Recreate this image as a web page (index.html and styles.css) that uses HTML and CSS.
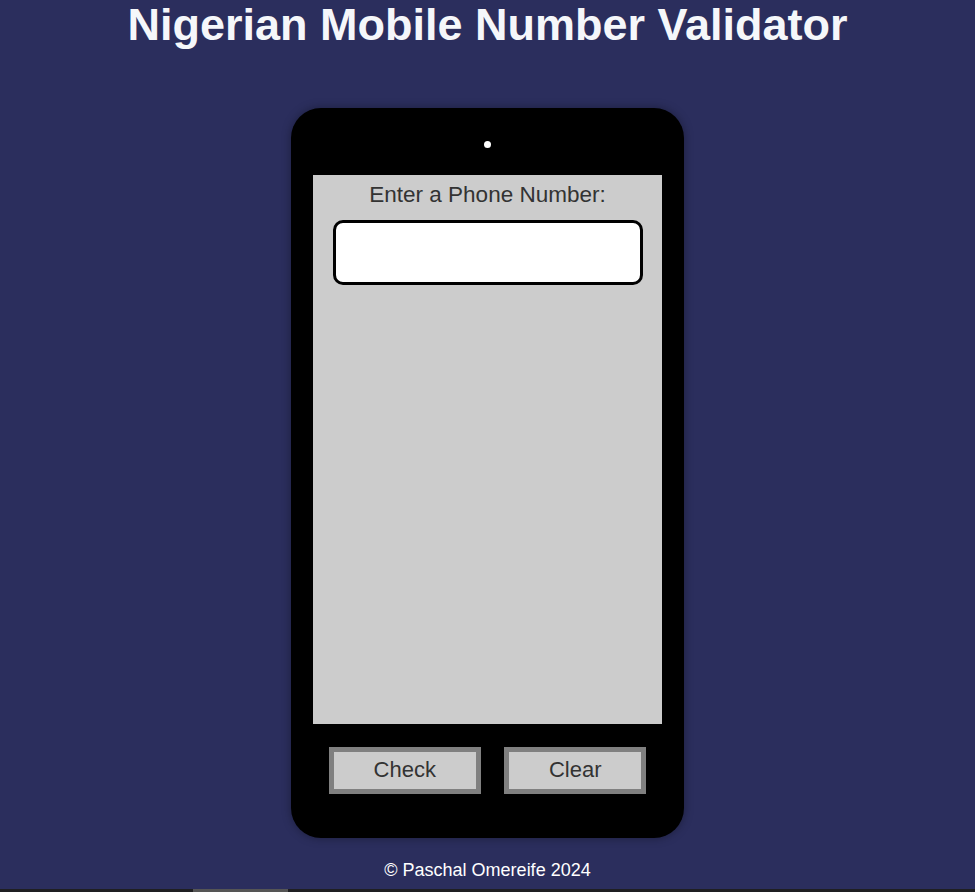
FILE: index.html
```html
<!DOCTYPE html>
<html lang="en">
<head>
<meta charset="utf-8">
<title>Nigerian Mobile Number Validator</title>
<link rel="stylesheet" href="styles.css">
</head>
<body>
<h1 class="title">Nigerian Mobile Number Validator</h1>
<main class="phone">
  <div class="camera"></div>
  <section class="screen">
    <label class="label" for="user-input">Enter a Phone Number:</label>
    <input class="number-input" id="user-input" type="text">
  </section>
  <div class="controls">
    <button class="btn" type="button">Check</button>
    <button class="btn" type="button">Clear</button>
  </div>
</main>
<footer class="footer">© Paschal Omereife 2024</footer>
<div class="strip"><span class="strip-thumb"></span></div>
</body>
</html>
```

FILE: styles.css
```css
* {
  box-sizing: border-box;
}

body {
  margin: 0;
  background: #2b2e5d;
  font-family: "Liberation Sans", Arial, sans-serif;
  overflow: hidden;
}

.title {
  margin: 0;
  text-align: center;
  color: #f5f7fa;
  font-size: 45px;
  font-weight: bold;
  line-height: 50px;
}

.phone {
  width: 393px;
  height: 730px;
  margin: 58px auto 0;
  background: #000;
  border-radius: 30px;
  box-shadow: 0 0 10px rgba(0, 0, 0, 0.35);
  display: flex;
  flex-direction: column;
  align-items: center;
  padding-top: 33px;
}

.camera {
  width: 7px;
  height: 7px;
  border-radius: 50%;
  background: #fff;
  margin-bottom: 27px;
}

.screen {
  width: 349px;
  height: 549px;
  background: #ccc;
  display: flex;
  flex-direction: column;
  align-items: center;
  padding-top: 7px;
}

.label {
  color: #333;
  font-size: 22.5px;
  line-height: 25px;
}

.number-input {
  margin-top: 13px;
  width: 310px;
  height: 65px;
  border: 3px solid #000;
  border-radius: 10px;
  background: #fff;
  font-size: 20px;
  font-family: inherit;
}

.controls {
  display: flex;
  justify-content: center;
  gap: 23px;
  margin-top: 23px;
}

.btn {
  height: 47px;
  padding: 0 40px 2px;
  border: 5px solid #808080;
  background: #ccc;
  color: #333;
  font-family: "Liberation Sans", Arial, sans-serif;
  font-size: 22px;
  line-height: 25px;
}

.footer {
  text-align: center;
  color: #fff;
  font-size: 18px;
  line-height: 21px;
  padding-top: 22px;
}

.strip {
  margin-top: 8px;
  height: 3px;
  background: #1f1f22;
  padding-left: 193px;
}

.strip-thumb {
  display: block;
  width: 95px;
  height: 3px;
  background: #555;
}
```
